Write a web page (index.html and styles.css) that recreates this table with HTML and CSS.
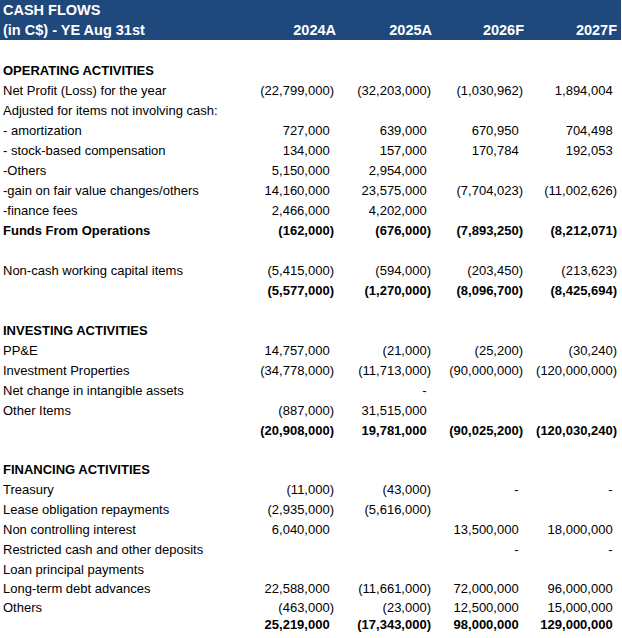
FILE: index.html
```html
<!DOCTYPE html>
<html>
<head>
<meta charset="utf-8">
<link rel="stylesheet" href="styles.css">
</head>
<body>
<div class="sheet">
  <div class="row head"><span class="label">CASH FLOWS</span><span></span><span></span><span></span><span></span></div>
  <div class="row head"><span class="label">(in C$) - YE Aug 31st</span><span>2024A</span><span>2025A</span><span>2026F</span><span>2027F</span></div>
  <div class="row"></div>
  <div class="row bold"><span class="label">OPERATING ACTIVITIES</span></div>
  <div class="row"><span class="label">Net Profit (Loss) for the year</span><span>(22,799,000)</span><span>(32,203,000)</span><span>(1,030,962)</span><span class="pos">1,894,004</span></div>
  <div class="row"><span class="label">Adjusted for items not involving cash:</span></div>
  <div class="row"><span class="label">- amortization</span><span class="pos">727,000</span><span class="pos">639,000</span><span class="pos">670,950</span><span class="pos">704,498</span></div>
  <div class="row"><span class="label">- stock-based compensation</span><span class="pos">134,000</span><span class="pos">157,000</span><span class="pos">170,784</span><span class="pos">192,053</span></div>
  <div class="row"><span class="label">-Others</span><span class="pos">5,150,000</span><span class="pos">2,954,000</span><span></span><span></span></div>
  <div class="row"><span class="label">-gain on fair value changes/others</span><span class="pos">14,160,000</span><span class="pos">23,575,000</span><span>(7,704,023)</span><span>(11,002,626)</span></div>
  <div class="row"><span class="label">-finance fees</span><span class="pos">2,466,000</span><span class="pos">4,202,000</span><span></span><span></span></div>
  <div class="row bold"><span class="label">Funds From Operations</span><span>(162,000)</span><span>(676,000)</span><span>(7,893,250)</span><span>(8,212,071)</span></div>
  <div class="row"></div>
  <div class="row"><span class="label">Non-cash working capital items</span><span>(5,415,000)</span><span>(594,000)</span><span>(203,450)</span><span>(213,623)</span></div>
  <div class="row bold"><span class="label"></span><span>(5,577,000)</span><span>(1,270,000)</span><span>(8,096,700)</span><span>(8,425,694)</span></div>
  <div class="row"></div>
  <div class="row bold"><span class="label">INVESTING ACTIVITIES</span></div>
  <div class="row"><span class="label">PP&amp;E</span><span class="pos">14,757,000</span><span>(21,000)</span><span>(25,200)</span><span>(30,240)</span></div>
  <div class="row"><span class="label">Investment Properties</span><span>(34,778,000)</span><span>(11,713,000)</span><span>(90,000,000)</span><span>(120,000,000)</span></div>
  <div class="row"><span class="label">Net change in intangible assets</span><span></span><span class="pos">-</span><span></span><span></span></div>
  <div class="row"><span class="label">Other Items</span><span>(887,000)</span><span class="pos">31,515,000</span><span></span><span></span></div>
  <div class="row bold"><span class="label"></span><span>(20,908,000)</span><span class="pos">19,781,000</span><span>(90,025,200)</span><span>(120,030,240)</span></div>
  <div class="row h19"></div>
  <div class="row bold"><span class="label">FINANCING ACTIVITIES</span></div>
  <div class="row"><span class="label">Treasury</span><span>(11,000)</span><span>(43,000)</span><span class="pos">-</span><span class="pos">-</span></div>
  <div class="row"><span class="label">Lease obligation repayments</span><span>(2,935,000)</span><span>(5,616,000)</span><span></span><span></span></div>
  <div class="row"><span class="label">Non controlling interest</span><span class="pos">6,040,000</span><span></span><span class="pos">13,500,000</span><span class="pos">18,000,000</span></div>
  <div class="row"><span class="label">Restricted cash and other deposits</span><span></span><span></span><span class="pos">-</span><span class="pos">-</span></div>
  <div class="row"><span class="label">Loan principal payments</span></div>
  <div class="row h19"><span class="label">Long-term debt advances</span><span class="pos">22,588,000</span><span>(11,661,000)</span><span class="pos">72,000,000</span><span class="pos">96,000,000</span></div>
  <div class="row h17"><span class="label">Others</span><span>(463,000)</span><span>(23,000)</span><span class="pos">12,500,000</span><span class="pos">15,000,000</span></div>
  <div class="row h19 bold"><span class="label"></span><span class="pos">25,219,000</span><span>(17,343,000)</span><span class="pos">98,000,000</span><span class="pos">129,000,000</span></div>
</div>
</body>
</html>
```

FILE: styles.css
```css
html, body {
  margin: 0;
  padding: 0;
  background: #ffffff;
}

body {
  font-family: "Liberation Sans", Arial, sans-serif;
  font-size: 13px;
  color: #000000;
}

.sheet {
  width: 621px;
}

.row {
  display: grid;
  grid-template-columns: 245px 92px 97px 92px 95px;
  height: 20px;
  align-items: end;
  line-height: 19px;
}

.row > span {
  padding-right: 3px;
  text-align: right;
  white-space: nowrap;
}

.row > span:last-child:not(.label) {
  padding-right: 4px;
}

.row > .label {
  padding-left: 3px;
  padding-right: 0;
  text-align: left;
}

.pos::after {
  content: ")";
  visibility: hidden;
}

.bold {
  font-weight: bold;
}

.head {
  background: #1f497d;
  color: #ffffff;
  font-weight: bold;
  font-size: 14.5px;
}

.head > span {
  padding-right: 2px;
}

.head > span:nth-child(2) {
  padding-right: 1px;
}

.h19 {
  height: 19px;
}

.h17 {
  height: 17px;
}
```
